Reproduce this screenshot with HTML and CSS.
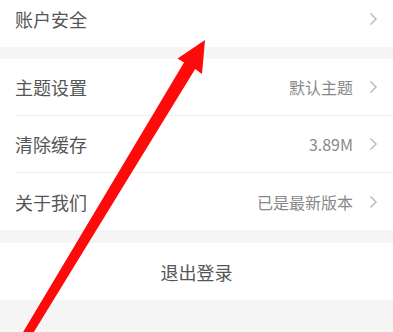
FILE: index.html
```html
<!DOCTYPE html>
<html lang="zh-CN">
<head>
  <meta charset="UTF-8">
  <meta name="viewport" content="width=device-width, initial-scale=1.0">
  <title>设置</title>
  <link rel="stylesheet" href="styles.css">
</head>
<body>
  <div class="page">
    <section class="group group-top">
      <div class="row">
        <span class="label">账户安全</span>
        <span class="chev"><svg width="9" height="14" viewBox="0 0 9 14"><polyline points="1.5,1.5 7,7 1.5,12.5" fill="none" stroke="#bdbdbd" stroke-width="1.5"/></svg></span>
      </div>
    </section>

    <section class="group">
      <div class="row">
        <span class="label">主题设置</span>
        <span class="value">默认主题</span>
        <span class="chev"><svg width="9" height="14" viewBox="0 0 9 14"><polyline points="1.5,1.5 7,7 1.5,12.5" fill="none" stroke="#bdbdbd" stroke-width="1.5"/></svg></span>
      </div>
      <div class="row">
        <span class="label">清除缓存</span>
        <span class="value">3.89M</span>
        <span class="chev"><svg width="9" height="14" viewBox="0 0 9 14"><polyline points="1.5,1.5 7,7 1.5,12.5" fill="none" stroke="#bdbdbd" stroke-width="1.5"/></svg></span>
      </div>
      <div class="row">
        <span class="label">关于我们</span>
        <span class="value">已是最新版本</span>
        <span class="chev"><svg width="9" height="14" viewBox="0 0 9 14"><polyline points="1.5,1.5 7,7 1.5,12.5" fill="none" stroke="#bdbdbd" stroke-width="1.5"/></svg></span>
      </div>
    </section>

    <section class="group">
      <div class="logout">退出登录</div>
    </section>
  </div>

  <svg class="arrow" width="393" height="332" viewBox="0 0 393 332">
    <polygon fill="#ff0a0a" points="205,40 202,74 195.2,69 25.9,345 18.1,340.4 184,62.4 177.6,58.5"/>
  </svg>
</body>
</html>
```

FILE: styles.css
```css
body {
  margin: 0;
  background-color: #f5f5f5;
  font-family: "Noto Sans CJK SC", "Noto Sans", sans-serif;
  overflow: hidden;
}
.page {
  width: 393px;
}
.group {
  background-color: #fff;
  margin-bottom: 13px;
}
.group-top {
  margin-top: -10px;
  margin-bottom: 12px;
}
.row {
  display: flex;
  align-items: center;
  height: 57px;
  margin-left: 15px;
  padding-right: 15px;
  border-bottom: 1px solid #efefef;
}
.row:last-child {
  border-bottom: none;
}
.group:not(.group-top) .row {
  height: 56px;
}
.group:not(.group-top) .row:last-child {
  height: 57px;
}
.label {
  flex: 1;
  font-size: 18px;
  color: #555;
}
.value {
  font-size: 16px;
  color: #888;
  margin-right: 16px;
}
.chev {
  display: flex;
  align-items: center;
}
.logout {
  height: 57px;
  display: flex;
  align-items: center;
  justify-content: center;
  font-size: 18px;
  color: #555;
}
.arrow {
  position: absolute;
  left: 0;
  top: 0;
}
```
